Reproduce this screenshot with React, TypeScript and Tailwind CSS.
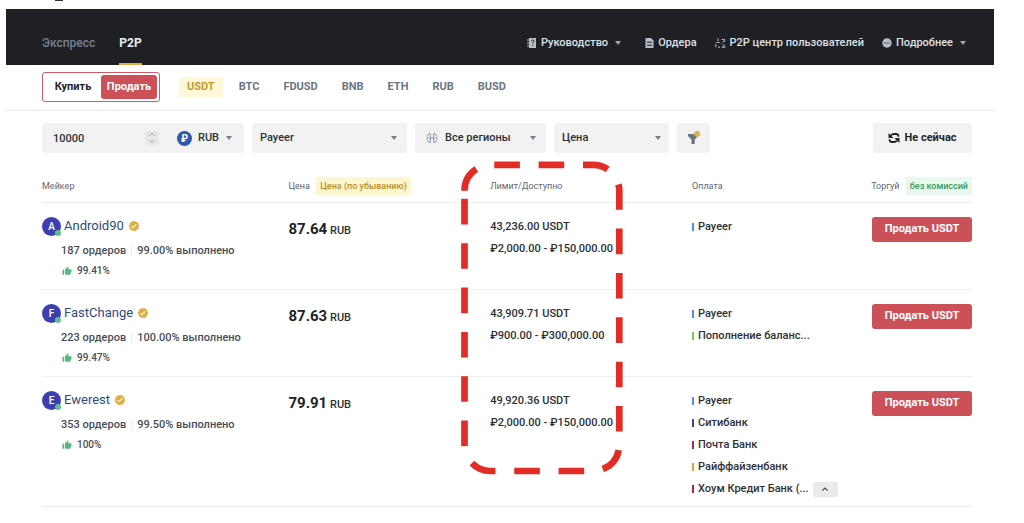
import { useState } from 'react';
import { MdThumbUp, MdVerified } from 'react-icons/md';

type Payment = { name: string; bar: string };

type Offer = {
  maker: string;
  orders: string;
  completed: string;
  rate: string;
  price: string;
  available: string;
  limit: string;
  payments: Payment[];
  expandable?: boolean;
};

const coins = ['USDT', 'BTC', 'FDUSD', 'BNB', 'ETH', 'RUB', 'BUSD'];

const payeer = { name: 'Payeer', bar: 'bg-[#4a90e2]' };

const offers: Offer[] = [
  {
    maker: 'Android90',
    orders: '187 ордеров',
    completed: '99.00% выполнено',
    rate: '99.41%',
    price: '87.64',
    available: '43,236.00 USDT',
    limit: '₽2,000.00 - ₽150,000.00',
    payments: [payeer],
  },
  {
    maker: 'FastChange',
    orders: '223 ордеров',
    completed: '100.00% выполнено',
    rate: '99.47%',
    price: '87.63',
    available: '43,909.71 USDT',
    limit: '₽900.00 - ₽300,000.00',
    payments: [payeer, { name: 'Пополнение баланс...', bar: 'bg-[#7ac858]' }],
  },
  {
    maker: 'Ewerest',
    orders: '353 ордеров',
    completed: '99.50% выполнено',
    rate: '100%',
    price: '79.91',
    available: '49,920.36 USDT',
    limit: '₽2,000.00 - ₽150,000.00',
    payments: [
      payeer,
      { name: 'Ситибанк', bar: 'bg-[#27528f]' },
      { name: 'Почта Банк', bar: 'bg-[#a52a4a]' },
      { name: 'Райффайзенбанк', bar: 'bg-[#d9a03c]' },
      { name: 'Хоум Кредит Банк (...', bar: 'bg-[#b3263c]' },
    ],
    expandable: true,
  },
];

const Caret = ({ className = '' }: { className?: string }) => (
  <svg viewBox="0 0 6 4" className={`h-1 w-1.5 shrink-0 fill-current ${className}`} aria-hidden="true">
    <path d="M0 0h6L3 4z" />
  </svg>
);

const GuideIcon = () => (
  <svg viewBox="0 0 10 12" className="h-3 w-[10px] shrink-0" aria-hidden="true">
    <path d="M2 1h7v10H2z" fill="#b7bdc6" />
    <path d="M0 3h3M0 6h3M0 9h3" stroke="#b7bdc6" strokeWidth="1.2" />
    <path d="M4.3 4.2c0-1.6 2.7-1.6 2.7 0 0 1-1.3 1.1-1.3 2.3M5.7 7.8v1" fill="none" stroke="#1e2023" strokeWidth="1" />
  </svg>
);

const OrdersIcon = () => (
  <svg viewBox="0 0 9 12" className="h-3 w-[9px] shrink-0" aria-hidden="true">
    <path d="M.5 1H6l2.5 2.5V11h-8z" fill="#b7bdc6" />
    <path d="M2 5.2h5M2 8.2h5" stroke="#1e2023" strokeWidth="1.1" />
  </svg>
);

const UserCenterIcon = () => (
  <svg viewBox="0 0 11 12" className="h-3 w-[11px] shrink-0" fill="none" stroke="#a0a6b0" strokeWidth="1.2" aria-hidden="true">
    <path d="M3 1.500V4M.8 5.500h4M.8 10.200V8h1M3 10.200h2" />
    <path d="M6.500 2.500h3v2H7.800M6.500 6.500h1M9.500 7.500 7.500 10.200h3" />
  </svg>
);

const MoreIcon = () => (
  <svg viewBox="0 0 10 10" className="size-[10px] shrink-0" aria-hidden="true">
    <circle cx="5" cy="5" r="4.7" fill="#b7bdc6" />
    <path d="M2.3 5h1.2M4.4 5h1.2M6.500 5h1.2" stroke="#1e2023" strokeWidth="1.1" />
  </svg>
);

const RegionsIcon = () => (
  <svg viewBox="0 0 12 12" className="size-3 shrink-0" fill="none" stroke="#8a919e" aria-hidden="true">
    <path d="M4 1.200A5.200 5.200 0 0 0 1 4.500M1 7.500a5.200 5.200 0 0 0 3 3.300M8 1.200a5.200 5.200 0 0 1 3 3.300M11 7.500a5.200 5.200 0 0 1-3 3.300" />
    <path d="M4.300 1.500v9M7.700 1.500v9M.5 6h3M5 6h2M8.500 6h3" />
  </svg>
);

const FilterIcon = () => (
  <svg viewBox="0 0 14 16" className="h-4 w-[14px]" aria-hidden="true">
    <path d="M1 4h10v2L7.700 9.500V14H4.500V9.500L1 6z" fill="#6b7280" />
    <circle cx="10.2" cy="3.8" r="3" fill="#dcb445" />
  </svg>
);

const RefreshIcon = () => (
  <svg viewBox="0 0 12 12" className="size-3" fill="none" stroke="#1e2329" strokeWidth="1.8" aria-hidden="true">
    <path d="M3 3.300Q4.200 2 6 2h2.200Q10.500 2 10.500 4.800M9 8.700Q7.800 10 6 10H3.800Q1.500 10 1.500 7.200" />
    <path d="M.5 1v5h5zM11.500 11V6h-5z" fill="#1e2329" stroke="none" />
  </svg>
);

/* Dashed frame that points out the limits column */
const LimitHighlight = () => (
  <svg
    viewBox="0 0 162 314"
    className="pointer-events-none absolute top-2 -left-[29px] h-[314px] w-[162px] max-w-none"
    fill="none"
    stroke="#e12d26"
    strokeWidth="6.7"
    strokeDasharray="25.6 18.75"
    aria-hidden="true"
  >
    <path d="M3.500 29.800a26 26 0 0 1 26-26H132.300a26 26 0 0 1 26 26V284a26 26 0 0 1-26 26H29.500a26 26 0 0 1-26-26Z" />
  </svg>
);

const TopNav = () => (
  <header className="flex items-start justify-between bg-[#1e2023] pt-6 pr-7 pl-9">
    <nav className="flex gap-6 text-xs leading-5 font-medium">
      <a href="#express" className="text-[#76808f]">Экспресс</a>
      <a href="#p2p" className="border-b-2 border-[#e0b040] pb-[10px] font-bold text-[#eaecef]">P2P</a>
    </nav>
    <nav className="flex text-[11px] leading-5 font-medium text-[#dfe2e6]">
      <a href="#guide" className="mr-6 flex items-center gap-1">
        <GuideIcon />
        Руководство
        <Caret className="ml-[3px] text-[#a0a6b0]" />
      </a>
      <a href="#orders" className="mr-[18px] flex items-center gap-1">
        <OrdersIcon />
        Ордера
      </a>
      <a href="#center" className="mr-[18px] flex items-center gap-1">
        <UserCenterIcon />
        P2P центр пользователей
      </a>
      <a href="#more" className="flex items-center gap-1">
        <MoreIcon />
        Подробнее
        <Caret className="ml-[3px] text-[#a0a6b0]" />
      </a>
    </nav>
  </header>
);

const CoinBar = () => {
  const [coin, setCoin] = useState('USDT');

  return (
    <div className="flex items-center border-b-2 border-[#f0f1f2] py-[7px] pl-9">
      <div className="flex h-[30px] w-[118px] items-stretch rounded-[3px] border border-[#cf5c66] p-0.5 text-[11px] font-bold">
        <button type="button" className="flex-1 text-[#1e2329]">Купить</button>
        <button type="button" className="w-14 rounded-[3px] bg-[#cc5058] text-white">Продать</button>
      </div>
      <div className="ml-[19px] flex gap-2 text-[11px] leading-5 font-bold">
        {coins.map((c) => (
          <button
            key={c}
            type="button"
            onClick={() => setCoin(c)}
            className={c === coin ? 'rounded-[2px] bg-[#fef8d9] px-2 text-[#c49a2c]' : 'px-2 text-[#6c7583]'}
          >
            {c}
          </button>
        ))}
      </div>
    </div>
  );
};

const field = 'grid items-center rounded-[3px] bg-[#f2f2f2]';
const select = 'col-start-1 row-start-1 h-full w-full appearance-none text-[#2b3037] outline-none';
const fieldCaret = 'pointer-events-none col-start-1 row-start-1 mr-[10px] justify-self-end text-[#76808f]';

const Filters = () => {
  const [amount, setAmount] = useState(10000);

  return (
    <form className="flex h-[30px] gap-2 text-[11px] font-medium text-[#2b3037]" onSubmit={(e) => e.preventDefault()}>
      <div className="flex w-[202px] items-center rounded-[3px] bg-[#f2f2f2]">
        <input
          type="text"
          inputMode="numeric"
          aria-label="Сумма"
          value={amount}
          onChange={(e) => setAmount(Number(e.target.value) || 0)}
          className="h-full min-w-0 flex-1 pl-[11px] outline-none"
        />
        <div className="flex w-[14px] flex-col rounded-[2px] bg-[#e6e7e8] text-[#9a9fa8]">
          <button type="button" aria-label="Больше" onClick={() => setAmount(amount + 1)} className="flex h-[7px] items-center justify-center">
            <svg viewBox="0 0 8 5" className="h-[5px] w-2" fill="none" stroke="currentColor"><path d="M1.500 3.500 4 1.200l2.500 2.300" /></svg>
          </button>
          <button type="button" aria-label="Меньше" onClick={() => setAmount(amount - 1)} className="flex h-[7px] items-center justify-center">
            <svg viewBox="0 0 8 5" className="h-[5px] w-2" fill="none" stroke="currentColor"><path d="M1.500 1.200 4 3.500l2.500-2.300" /></svg>
          </button>
        </div>
        <span className="ml-[18px] flex size-[15px] items-center justify-center rounded-full bg-[#3156ae] text-[10px] font-bold text-white">₽</span>
        <div className="grid h-full w-[52px] items-center">
          <select aria-label="Валюта" className={`${select} pl-1.5`}>
            <option>RUB</option>
          </select>
          <Caret className="pointer-events-none col-start-1 row-start-1 mr-3 justify-self-end text-[#76808f]" />
        </div>
      </div>
      <div className={`${field} w-[155px]`}>
        <select aria-label="Способ оплаты" className={`${select} pl-2`}>
          <option>Payeer</option>
        </select>
        <Caret className={fieldCaret} />
      </div>
      <div className={`${field} w-[131px]`}>
        <span className="pointer-events-none col-start-1 row-start-1 ml-[11px]"><RegionsIcon /></span>
        <select aria-label="Регион" className={`${select} pl-[30px]`}>
          <option>Все регионы</option>
        </select>
        <Caret className={fieldCaret} />
      </div>
      <div className={`${field} w-[115px]`}>
        <select aria-label="Сортировка" className={`${select} pl-2`}>
          <option>Цена</option>
        </select>
        <Caret className="pointer-events-none col-start-1 row-start-1 mr-2 justify-self-end text-[#76808f]" />
      </div>
      <button type="button" aria-label="Фильтр" className="flex w-[33px] items-center justify-center rounded-[3px] bg-[#f2f2f2]">
        <FilterIcon />
      </button>
      <button type="button" className="ml-auto flex w-[99px] items-center justify-center gap-1 rounded-[3px] bg-[#f2f2f2] font-bold text-[#1e2329]">
        <RefreshIcon />
        Не сейчас
      </button>
    </form>
  );
};

const OfferRow = ({ offer }: { offer: Offer }) => (
  <tr className="border-b border-[#eceef0] align-top">
    <td className="pt-[13px] pb-2 font-medium text-[#474d57]">
      <div className="flex h-5 items-center">
        <span className="relative flex size-[19px] items-center justify-center rounded-full bg-[#3b3fb0] text-[10px] text-white">
          {offer.maker[0]}
          <span className="absolute right-0 bottom-0 size-[6px] rounded-full bg-[#5fbf86]" />
        </span>
        <a href="#maker" className="ml-[3px] text-[13px] leading-5 font-normal text-[#2d4b82]">{offer.maker}</a>
        <MdVerified className="ml-1 size-3 text-[#dcb045]" />
      </div>
      <div className="mt-[5px] ml-[19px] flex items-center text-[11px] leading-5">
        {offer.orders}
        <span className="mx-[5px] h-[10px] w-px bg-[#eaecef]" />
        {offer.completed}
      </div>
      <div className="ml-5 flex items-center gap-[5px] text-[10px] leading-5">
        <MdThumbUp className="size-[10px] text-[#55b87c]" />
        {offer.rate}
      </div>
    </td>
    <td className="pt-4 text-[11px] leading-5 font-medium text-[#2b3037]">
      <strong className="text-[15px] leading-5 font-bold text-[#1e2329]">{offer.price}</strong> RUB
    </td>
    <td className="pt-[13px] text-[11px] leading-[22px] font-medium whitespace-nowrap text-[#2b3037]">
      <div>{offer.available}</div>
      <div>{offer.limit}</div>
    </td>
    <td className="pt-[13px] pb-1.5">
      <ul className="text-[11px] leading-[22px] font-medium whitespace-nowrap text-[#2b3037]">
        {offer.payments.map((p, i) => (
          <li key={p.name} className="flex items-center">
            <span className={`mr-1 h-2 w-0.5 ${p.bar}`} />
            {p.name}
            {offer.expandable && i === offer.payments.length - 1 && (
              <button type="button" aria-label="Свернуть" className="ml-1 flex h-[15px] w-[25px] items-center justify-center rounded-[2px] bg-[#e9eaec]">
                <svg viewBox="0 0 8 6" className="h-1.5 w-2" fill="none" stroke="#474d57" strokeWidth="1.2">
                  <path d="M1.500 4.500 4 2l2.500 2.500" />
                </svg>
              </button>
            )}
          </li>
        ))}
      </ul>
    </td>
    <td className="pt-[14px]">
      <button type="button" className="ml-auto block h-[25px] w-[100px] rounded-[3px] bg-[#cc5058] text-[11px] font-bold text-white">Продать USDT</button>
    </td>
  </tr>
);

export default function App() {
  return (
    <div className="min-h-screen bg-white pr-[30px] pl-1.5 font-['Roboto','Liberation_Sans',sans-serif]">
      <div className="h-[9px] pl-[49px]">
        <div className="h-px w-2 bg-[#333]" />
      </div>
      <TopNav />
      <CoinBar />
      <main className="pt-3 pr-[22px] pl-9">
        <Filters />
        <table className="w-full table-fixed text-left">
          <thead>
            <tr className="border-b border-[#eceef0] text-[9px] leading-[18px] text-[#5e6673] [&>th]:pt-6 [&>th]:pb-[7px] [&>th]:font-normal [&>th]:whitespace-nowrap">
              <th className="w-[26.5%]">Мейкер</th>
              <th className="w-[21.7%]">
                Цена <span className="ml-1 inline-block bg-[#fef6d0] px-1 font-medium text-[#b9902b]">Цена (по убыванию)</span>
              </th>
              <th className="relative w-[21.7%]">
                Лимит/Доступно
                <LimitHighlight />
              </th>
              <th className="w-[17%]">Оплата</th>
              <th>
                <div className="text-right">
                  Торгуй <span className="ml-1 inline-block bg-[#e8f8ec] px-1 font-medium text-[#3d9a5d]">без комиссий</span>
                </div>
              </th>
            </tr>
          </thead>
          <tbody>
            {offers.map((offer) => (
              <OfferRow key={offer.maker} offer={offer} />
            ))}
          </tbody>
        </table>
      </main>
    </div>
  );
}
